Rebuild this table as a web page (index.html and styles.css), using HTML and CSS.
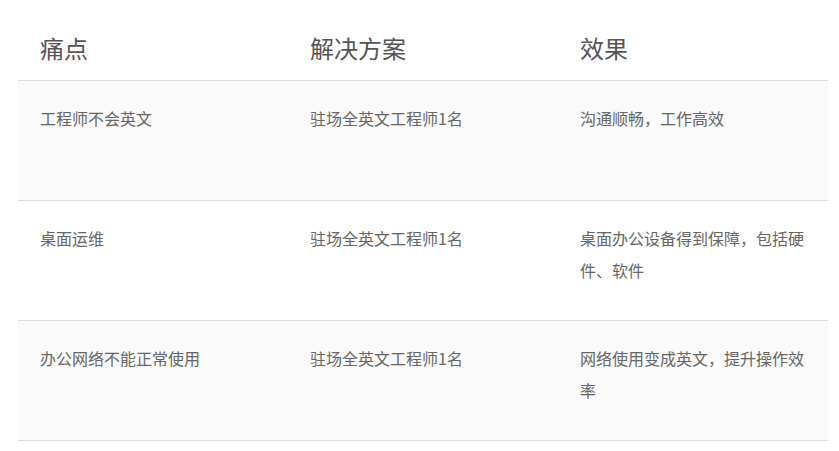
FILE: index.html
```html
<!DOCTYPE html>
<html lang="zh-CN">
<head>
<meta charset="utf-8">
<link rel="stylesheet" href="styles.css">
</head>
<body>
<div class="wrap">
  <div class="table">
    <div class="row head">
      <div class="cell">痛点</div>
      <div class="cell">解决方案</div>
      <div class="cell">效果</div>
    </div>
    <div class="row odd">
      <div class="cell">工程师不会英文</div>
      <div class="cell">驻场全英文工程师1名</div>
      <div class="cell">沟通顺畅，工作高效</div>
    </div>
    <div class="row">
      <div class="cell">桌面运维</div>
      <div class="cell">驻场全英文工程师1名</div>
      <div class="cell">桌面办公设备得到保障，包括硬件、软件</div>
    </div>
    <div class="row odd">
      <div class="cell">办公网络不能正常使用</div>
      <div class="cell">驻场全英文工程师1名</div>
      <div class="cell">网络使用变成英文，提升操作效率</div>
    </div>
  </div>
</div>
</body>
</html>
```

FILE: styles.css
```css
html, body {
  margin: 0;
  padding: 0;
  background: #fff;
}
.wrap {
  padding-left: 18px;
}
.table {
  width: 810px;
  font-family: "Noto Sans CJK SC", "Microsoft YaHei", sans-serif;
}
.row {
  display: grid;
  grid-template-columns: 270px 270px 270px;
  height: 119px;
  border-bottom: 1px solid #dcdcdc;
  box-sizing: content-box;
}
.row.odd {
  background: #fafafa;
}
.row .cell {
  padding: 21px 22px 0 22px;
  font-size: 16px;
  line-height: 32px;
  color: #666;
}
.row.head {
  height: 80px;
  background: #fff;
}
.row.head .cell {
  padding-top: 28px;
  font-size: 24px;
  line-height: 40px;
  color: #555;
}
```
